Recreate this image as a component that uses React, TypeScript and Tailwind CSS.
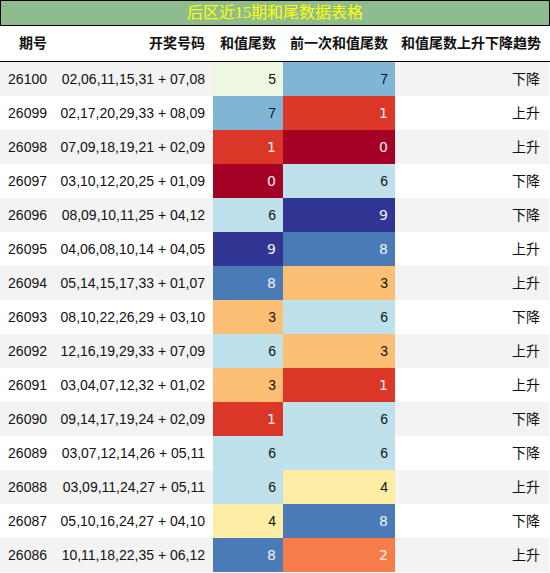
import React from "react";

const rows: [string, string, number, number, string][] = [
  ["26100", "02,06,11,15,31 + 07,08", 5, 7, "下降"],
  ["26099", "02,17,20,29,33 + 08,09", 7, 1, "上升"],
  ["26098", "07,09,18,19,21 + 02,09", 1, 0, "上升"],
  ["26097", "03,10,12,20,25 + 01,09", 0, 6, "下降"],
  ["26096", "08,09,10,11,25 + 04,12", 6, 9, "下降"],
  ["26095", "04,06,08,10,14 + 04,05", 9, 8, "上升"],
  ["26094", "05,14,15,17,33 + 01,07", 8, 3, "上升"],
  ["26093", "08,10,22,26,29 + 03,10", 3, 6, "下降"],
  ["26092", "12,16,19,29,33 + 07,09", 6, 3, "上升"],
  ["26091", "03,04,07,12,32 + 01,02", 3, 1, "上升"],
  ["26090", "09,14,17,19,24 + 02,09", 1, 6, "下降"],
  ["26089", "03,07,12,14,26 + 05,11", 6, 6, "下降"],
  ["26088", "03,09,11,24,27 + 05,11", 6, 4, "上升"],
  ["26087", "05,10,16,24,27 + 04,10", 4, 8, "下降"],
  ["26086", "10,11,18,22,35 + 06,12", 8, 2, "上升"],
];

const heat: Record<number, string> = {
  0: "bg-[#a50026] text-[#f2f2f2] font-['DejaVu_Sans',sans-serif]",
  1: "bg-[#db3628] text-[#f2f2f2] font-['DejaVu_Sans',sans-serif]",
  2: "bg-[#f67c4a] text-[#f2f2f2] font-['DejaVu_Sans',sans-serif]",
  3: "bg-[#fdbf73] text-[#111]",
  4: "bg-[#fdeea5] text-[#111]",
  5: "bg-[#eef7df] text-[#111]",
  6: "bg-[#bfe1ec] text-[#111]",
  7: "bg-[#80b5d5] text-[#111]",
  8: "bg-[#4a7bb7] text-[#f2f2f2] font-['DejaVu_Sans',sans-serif]",
  9: "bg-[#313695] text-[#f2f2f2] font-['DejaVu_Sans',sans-serif]",
};

export default function App() {
  return (
    <div className="w-[550px] h-[573px] bg-white font-['Liberation_Sans','Noto_Sans_CJK_SC',sans-serif] text-[14px] text-[#111]">
      <div className="h-[26px] border border-black bg-[#8fbc8f] flex items-center justify-center text-[16px] leading-none text-[#ffff00] font-['Liberation_Serif','Noto_Sans_CJK_SC',serif]">
        后区近15期和尾数据表格
      </div>
      <div className="grid grid-cols-[55px_158px_70px_112px_155px] h-[36px] border-b border-black font-bold items-center">
        <div className="text-right pr-[8px]">期号</div>
        <div className="text-right pr-[8px]">开奖号码</div>
        <div className="text-right pr-[7px]">和值尾数</div>
        <div className="text-right pr-[7px]">前一次和值尾数</div>
        <div className="text-right pr-[9px]">和值尾数上升下降趋势</div>
      </div>
      {rows.map((r, i) => {
        const stripe = i % 2 === 0 ? "bg-[#f3f3f3]" : "bg-white";
        return (
          <div key={r[0]} className="grid grid-cols-[55px_158px_70px_112px_155px] h-[34px]">
            <div className={`${stripe} flex items-center justify-end pr-[8px]`}>{r[0]}</div>
            <div className={`${stripe} flex items-center justify-end pr-[8px]`}>{r[1]}</div>
            <div className={`${heat[r[2]]} flex items-center justify-end pr-[7px]`}>{r[2]}</div>
            <div className={`${heat[r[3]]} flex items-center justify-end pr-[7px]`}>{r[3]}</div>
            <div className={`${stripe} flex items-center justify-end pr-[9px] mr-[1px]`}>{r[4]}</div>
          </div>
        );
      })}
    </div>
  );
}
